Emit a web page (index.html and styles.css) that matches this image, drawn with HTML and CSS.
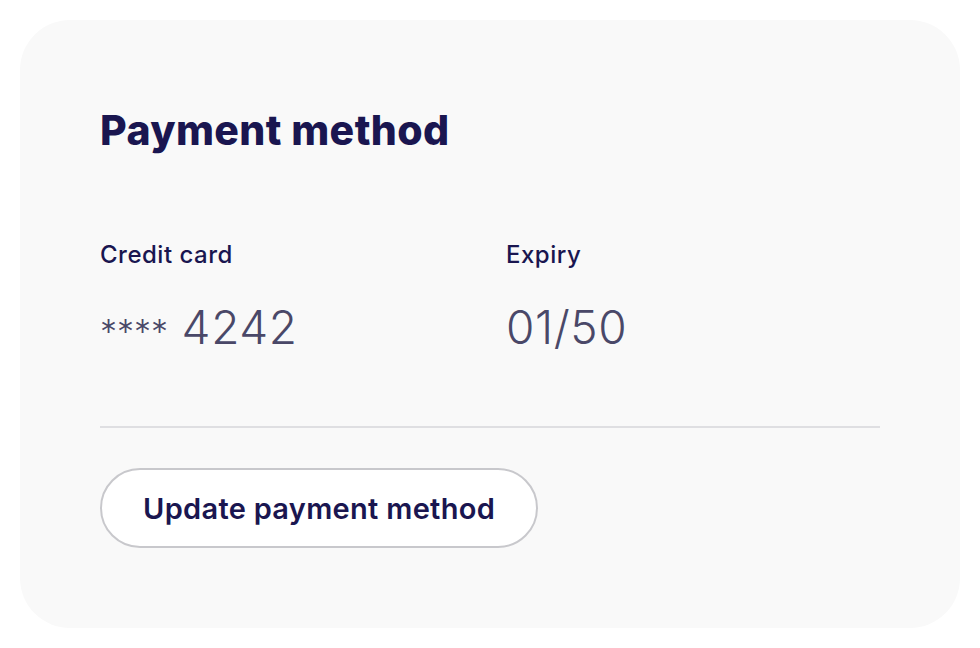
FILE: index.html
```html
<!DOCTYPE html>
<html lang="en">
<head>
    <meta charset="UTF-8">
    <meta name="viewport" content="width=device-width, initial-scale=1.0">
    <title>Payment method</title>
    <link rel="stylesheet" href="styles.css">
</head>
<body>
    <section class="sec-payment">
        <h1 class="head-title">Payment method</h1>
        <div class="info-grid">
            <div class="info-item">
                <h2 class="info-label">Credit card</h2>
                <p class="info-value"><span class="stars">****</span> 4242</p>
            </div>
            <div class="info-item">
                <h2 class="info-label">Expiry</h2>
                <p class="info-value">01/50</p>
            </div>
        </div>
        <hr class="divider">
        <button class="btn" type="button">Update payment method</button>
    </section>
</body>
</html>
```

FILE: styles.css
```css
body {
    margin: 0;
    padding: 20px;
    background-color: #ffffff;
    font-family: Inter, "Noto Sans", sans-serif;
    color: #1a1650;
}

.sec-payment {
    padding: 80px;
    background-color: #f9f9f9;
    border-radius: 50px;
}

.head-title {
    margin: 0;
    font-size: 41px;
    line-height: 60px;
    font-weight: 800;
    letter-spacing: 0.4px;
}

.info-grid {
    display: grid;
    grid-template-columns: 1fr 1fr;
    gap: 32px;
    margin-top: 80px;
}

.info-label {
    margin: 0;
    font-size: 24px;
    line-height: 30px;
    font-weight: 500;
    letter-spacing: 0.5px;
}

.info-value {
    margin: 31px 0 0 0;
    font-size: 46px;
    line-height: 52px;
    font-weight: 300;
    letter-spacing: 0.6px;
    color: #4a4868;
}

.stars {
    font-size: 34px;
    letter-spacing: 0;
}

.divider {
    margin: 68px 0 40px 0;
    border: 0;
    border-top: 2px solid #dfdfe2;
}

.btn {
    height: 80px;
    padding: 0 41px;
    background-color: #ffffff;
    border: 2px solid #c8c8cc;
    border-radius: 40px;
    font-family: inherit;
    font-size: 29px;
    font-weight: 600;
    letter-spacing: 0.3px;
    color: #1a1650;
}

.btn:hover {
    cursor: pointer;
}
```
